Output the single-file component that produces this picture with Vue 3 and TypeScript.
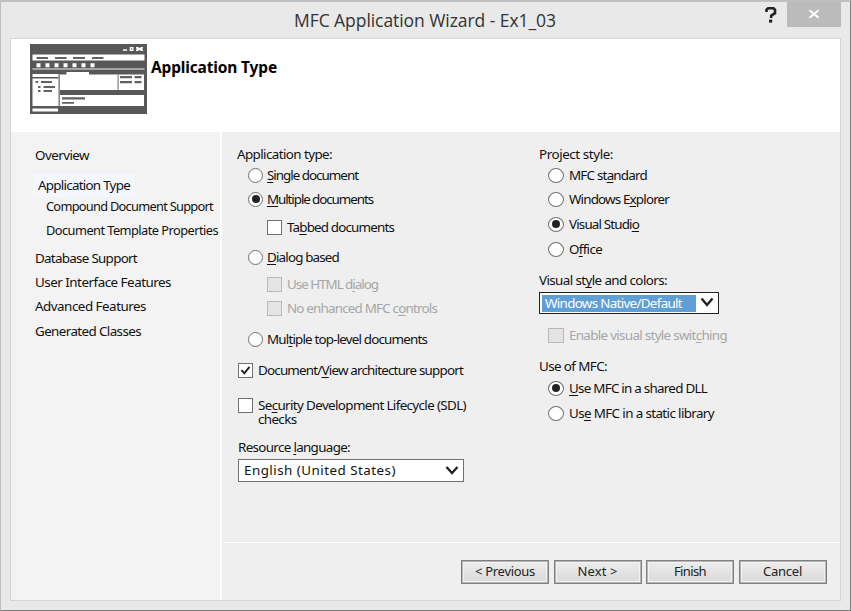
<script setup lang="ts">
import { h, ref, type FunctionalComponent, type VNode } from 'vue'

interface Option {
  text: string
  width: number
  kind: 'radio' | 'check'
  on?: boolean
  disabled?: boolean
  indent?: boolean
  flush?: boolean
}

// Draws a caption; "&" marks the mnemonic letter. Tracking is adjusted to the given width.
const Caption: FunctionalComponent<{ text: string; width: number }> = (props) => {
  const at = props.text.indexOf('&')
  const kids: (string | VNode)[] =
    at < 0
      ? [props.text]
      : [props.text.slice(0, at), h('u', props.text[at + 1]), props.text.slice(at + 2)]
  return h(
    'span',
    {
      class: 'caption',
      onVnodeMounted: (vnode: VNode) => {
        const el = vnode.el as HTMLElement
        const lines = (el.textContent ?? '').split('\n')
        const count = Math.max(...lines.map((line) => line.length))
        const natural = el.getBoundingClientRect().width
        el.style.letterSpacing = `${(props.width - natural) / count}px`
      },
    },
    kids,
  )
}
Caption.props = ['text', 'width']

const pages = ref([
  { text: 'Overview', width: 54, cls: '' },
  { text: 'Application Type', width: 92, cls: 'current' },
  { text: 'Compound Document Support', width: 167, cls: 'sub' },
  { text: 'Document Template Properties', width: 172, cls: 'sub' },
  { text: 'Database Support', width: 102, cls: '' },
  { text: 'User Interface Features', width: 136, cls: '' },
  { text: 'Advanced Features', width: 111, cls: '' },
  { text: 'Generated Classes', width: 106, cls: '' },
])

const appTypes: Option[] = [
  { text: '&Single document', width: 91, kind: 'radio' },
  { text: '&Multiple documents', width: 106, kind: 'radio', on: true },
  { text: 'Ta&bbed documents', width: 107, kind: 'check', indent: true },
  { text: '&Dialog based', width: 72, kind: 'radio' },
  { text: 'Use HTML d&ialog', width: 91, kind: 'check', indent: true, disabled: true },
  { text: 'No enhanced MFC c&ontrols', width: 150, kind: 'check', indent: true, disabled: true },
  { text: 'Mul&tiple top-level documents', width: 160, kind: 'radio' },
  { text: 'Document/&View architecture support', width: 205, kind: 'check', on: true, flush: true },
]

const sdl = 'Se&curity Development Lifecycle (SDL)\nchecks'

const styles: Option[] = [
  { text: 'MFC st&andard', width: 78, kind: 'radio' },
  { text: 'Windows E&xplorer', width: 100, kind: 'radio' },
  { text: 'Visual Studi&o', width: 70, kind: 'radio', on: true },
  { text: 'O&ffice', width: 33, kind: 'radio' },
]

const linkage: Option[] = [
  { text: '&Use MFC in a shared DLL', width: 138, kind: 'radio', on: true },
  { text: 'Us&e MFC in a static library', width: 145, kind: 'radio' },
]

const buttons = [
  { text: '< Previous', width: 60 },
  { text: 'Next >', width: 40 },
  { text: 'Finish', width: 32 },
  { text: 'Cancel', width: 39 },
]
</script>

<template>
  <div class="window">
    <header class="titlebar">
      <span class="title"><Caption text="MFC Application Wizard - Ex1_03" :width="262" /></span>
      <svg class="help" width="12" height="16" viewBox="0 0 12 16">
        <path d="M1.500 5V2.800L3 1.300h5.500L10 2.800v3.400L6.200 8.600V11" fill="none" stroke="#222" stroke-width="2.600" />
        <rect x="4" y="12.600" width="3.200" height="3" fill="#222" />
      </svg>
      <div class="close">
        <svg width="12" height="10" viewBox="0 0 12 10">
          <path d="M1.500 1.200l9 7.600M10.500 1.200L1.500 8.800" stroke="#fff" stroke-width="2" fill="none" />
        </svg>
      </div>
    </header>

    <main class="client">
      <section class="banner">
        <svg class="thumb" width="117" height="70" viewBox="0 0 117 70">
          <rect width="117" height="70" fill="#58585a" />
          <g fill="#fff">
            <rect x="93" y="5.300" width="4" height="1.500" />
            <path fill-rule="evenodd" d="M99.700 3h3.800v4h-3.800zM101.200 4.300v1.400h1V4.300z" />
            <path d="M106 3h2l1.500 1 1.500-1h2v1.300l-1 .7 1 .7V7h-2l-1.500-1-1.500 1h-2V5.700l1-.7-1-.7z" />
            <rect x="2.500" y="10.500" width="112" height="6" />
            <path d="M6.500 19.300h4v4h-4zM15.500 19.300h4v4h-4zM24.500 19.300h4v4h-4zM33.500 19.300h4v4h-4zM42.500 19.300h4v4h-4zM51.500 19.300h4v4h-4zM60.500 19.300h4v4h-4z" />
            <rect x="2.500" y="30" width="26" height="3" />
            <rect x="2.500" y="34.500" width="26" height="27.500" />
            <path d="M30 30.500h6.500V28H59v2.500h28V46H30z" />
            <rect x="88.500" y="30.500" width="25.500" height="15.500" />
            <rect x="30" y="51" width="84" height="11" />
            <rect x="2.500" y="64.500" width="25.500" height="3" />
          </g>
          <path fill="#bdbdbf" d="M2.500 24.300h112v1.500h-112zM28.500 30h1v32h-1zM87 30h1v16h-1z" />
          <g fill="#626264">
            <path d="M6.500 13h11.500v2H6.500zM25 13h11.500v2H25zM43 13h12v2H43zM62 13h11.500v2H62z" />
            <path d="M5.500 37h2.500v2H5.500zM11 37h11v2H11zM8 42h2.500v2H8zM13.500 42H25v2H13.500zM8 46h2.500v2H8zM13.500 46H22v2h-8.500z" />
            <path d="M90 32h12v2.300H90zM104.500 32h7v2.300h-7zM90 37h12v2.300H90zM104.500 37h7v2.300h-7z" />
            <path d="M32 53.300h23v2.200H32zM32 58h12v1.800H32z" />
          </g>
        </svg>
        <h1><Caption text="Application Type" :width="126" /></h1>
      </section>

      <div class="body">
        <nav class="pages">
          <div v-for="p in pages" :key="p.text" class="page" :class="p.cls">
            <Caption :text="p.text" :width="p.width" />
          </div>
        </nav>

        <div class="content">
          <div class="form">
            <div class="column types">
              <div class="row"><Caption text="Application type:" :width="95" /></div>
              <label
                v-for="o in appTypes"
                :key="o.text"
                class="row option"
                :class="{ indent: o.indent, flush: o.flush, disabled: o.disabled }"
              >
                <i class="mark" :class="[o.kind, { on: o.on }]">
                  <svg v-if="o.kind === 'check' && o.on" width="11" height="11" viewBox="0 0 11 11">
                    <path d="M1.500 5.200L4.300 8.300 9.500 1.800" fill="none" stroke="#222" stroke-width="2" />
                  </svg>
                </i>
                <Caption :text="o.text" :width="o.width" />
              </label>
              <label class="option flush wrapped">
                <i class="mark check"></i>
                <Caption :text="sdl" :width="208" />
              </label>
              <div class="row"><Caption text="Resource &language:" :width="112" /></div>
              <div class="combo language">
                <span class="value"><Caption text="English (United States)" :width="152" /></span>
                <svg width="14" height="10" viewBox="0 0 14 10">
                  <path d="M1.500 1L7 7l5.500-6" fill="none" stroke="#222" stroke-width="2.300" />
                </svg>
              </div>
            </div>

            <div class="column look">
              <div class="row"><Caption text="Project style:" :width="74" /></div>
              <label v-for="o in styles" :key="o.text" class="row option">
                <i class="mark" :class="[o.kind, { on: o.on }]"></i>
                <Caption :text="o.text" :width="o.width" />
              </label>
              <div class="row"><Caption text="Visual st&yle and colors:" :width="128" /></div>
              <div class="combo focused">
                <span class="value"><Caption text="Windows Native/Default" :width="137" /></span>
                <svg width="14" height="10" viewBox="0 0 14 10">
                  <path d="M1.500 .5L7 7 12.500 .5" fill="none" stroke="#222" stroke-width="2.400" />
                </svg>
              </div>
              <label class="row option disabled">
                <i class="mark check"></i>
                <Caption text="Enable visual style swit&ching" :width="158" />
              </label>
              <div class="row"><Caption text="Use of MFC:" :width="68" /></div>
              <label v-for="o in linkage" :key="o.text" class="row option">
                <i class="mark" :class="[o.kind, { on: o.on }]"></i>
                <Caption :text="o.text" :width="o.width" />
              </label>
            </div>
          </div>

          <footer class="actions">
            <button v-for="b in buttons" :key="b.text" type="button">
              <Caption :text="b.text" :width="b.width" />
            </button>
          </footer>
        </div>
      </div>
    </main>
  </div>
</template>

<style>
body {
  margin: 0;
  overflow: hidden;
}
.caption {
  white-space: pre;
}
.caption u {
  text-decoration-thickness: 1px;
  text-underline-offset: 2px;
  text-decoration-skip-ink: none;
}
</style>

<style scoped>
.window {
  box-sizing: border-box;
  width: 851px;
  height: 611px;
  padding: 0 9px 9px;
  display: flex;
  flex-direction: column;
  background: #e9e9e9;
  border: 1px solid #bfbfbf;
  border-top-width: 2px;
  border-right-color: #808080;
  border-bottom-color: #808080;
  font: 13.4px/20px "Noto Sans", sans-serif;
  color: #111;
}
.titlebar {
  height: 36px;
  display: flex;
  align-items: flex-start;
}
.title {
  flex: none;
  width: 471px;
  padding-left: 284px;
  font: 17.5px/24px "Open Sans", sans-serif;
  color: #333;
  padding-top: 6px;
}
.help {
  margin: 5px 10px 0 0;
}
.close {
  width: 54px;
  height: 25px;
  display: flex;
  align-items: center;
  justify-content: center;
  background: #bbb;
}
.close svg {
  margin-top: -2px;
}
.client {
  box-sizing: border-box;
  width: 831px;
  height: 563px;
  border: 1px solid #d5d5d5;
  display: flex;
  flex-direction: column;
}
.banner {
  height: 93px;
  display: flex;
  background: #fff;
}
.thumb {
  margin: 5px 4px 0 19px;
}
h1 {
  margin: 18px 0 0;
  font: bold 15.5px/20px "Noto Sans", sans-serif;
  color: #000;
}
.body {
  flex: 1;
  display: flex;
}
.pages {
  box-sizing: border-box;
  width: 211px;
  background: #f3f3f3;
  border-right: 2px solid #fff;
  display: grid;
  grid-template-rows: 33px 30px 21px 24px 28px 24px 24px 25px;
  align-items: end;
}
.page {
  height: 20px;
  padding-left: 24px;
}
.page.current {
  height: 23px;
  line-height: 23px;
  margin-left: 22px;
  margin-bottom: -2px;
  padding-left: 5px;
  width: 97px;
  background: #f5f7ff;
}
.page.sub {
  padding-left: 35px;
  font-size: 12.8px;
}
.content {
  flex: 1;
  padding-left: 2px;
  background: #efefef;
  display: flex;
  flex-direction: column;
}
.form {
  height: 410px;
  display: flex;
}
.column {
  display: grid;
  align-content: start;
  align-items: end;
}
.types {
  width: 287px;
  padding-left: 14px;
  grid-template-rows: 32px 21px 24px 28px 30px 27px 24px 31px 31px 49px 28px 25px;
}
.types > .row:first-child {
  margin-left: -1px;
}
.look {
  padding-left: 14px;
  grid-template-rows: 32px 21px 24px 25px 25px 31px 24px 31px 31px 22px 25px;
}
.row {
  height: 20px;
  display: flex;
  align-items: center;
}
.option {
  padding-left: 10px;
}
.indent {
  padding-left: 29px;
}
.flush {
  padding-left: 0;
}
.wrapped {
  display: flex;
  align-items: flex-start;
  height: 31px;
  line-height: 14px;
}
.mark {
  box-sizing: border-box;
  flex: none;
  width: 15px;
  height: 15px;
  margin-right: 4px;
  display: flex;
  align-items: center;
  justify-content: center;
  background: #fff;
  border: 1px solid #707070;
}
.radio {
  border-radius: 50%;
}
.radio.on::after {
  content: "";
  width: 8px;
  height: 8px;
  border-radius: 50%;
  background: #222;
}
.check {
  margin-right: 5px;
}
.disabled {
  color: #a6a6a6;
}
.disabled .mark {
  background: #e4e4e4;
  border-color: #b8b8b8;
}
.look .option {
  padding-left: 9px;
}
.look .mark {
  width: 16px;
  margin-right: 5px;
}
.combo {
  box-sizing: border-box;
  width: 226px;
  height: 23px;
  border: 1px solid #707070;
  background: #fff;
  display: flex;
  align-items: center;
  justify-content: space-between;
  padding: 0 4px 0 2px;
}
.value {
  padding-left: 3px;
}
.language .value {
  height: 21px;
}
.focused {
  width: 180px;
  height: 22px;
  border-color: #222;
}
.focused .value {
  box-sizing: border-box;
  width: 154px;
  height: 17px;
  line-height: 17px;
  background: #609ed6;
  color: #fff;
}
.actions {
  flex: 1;
  border-top: 1px solid #fff;
  display: flex;
  justify-content: flex-end;
  gap: 4.500px;
  padding: 17px 13.500px 0 0;
}
button {
  width: 88px;
  height: 24px;
  padding: 0 0 2px;
  border: 1px solid #808080;
  box-shadow: inset 0 0 0 1px #b4b4b4, inset 0 0 0 2px #f3f3f3;
  background: linear-gradient(#ededed, #d9d9d9);
  font: 13px/20px "Noto Sans", sans-serif;
  color: #222;
}
</style>
